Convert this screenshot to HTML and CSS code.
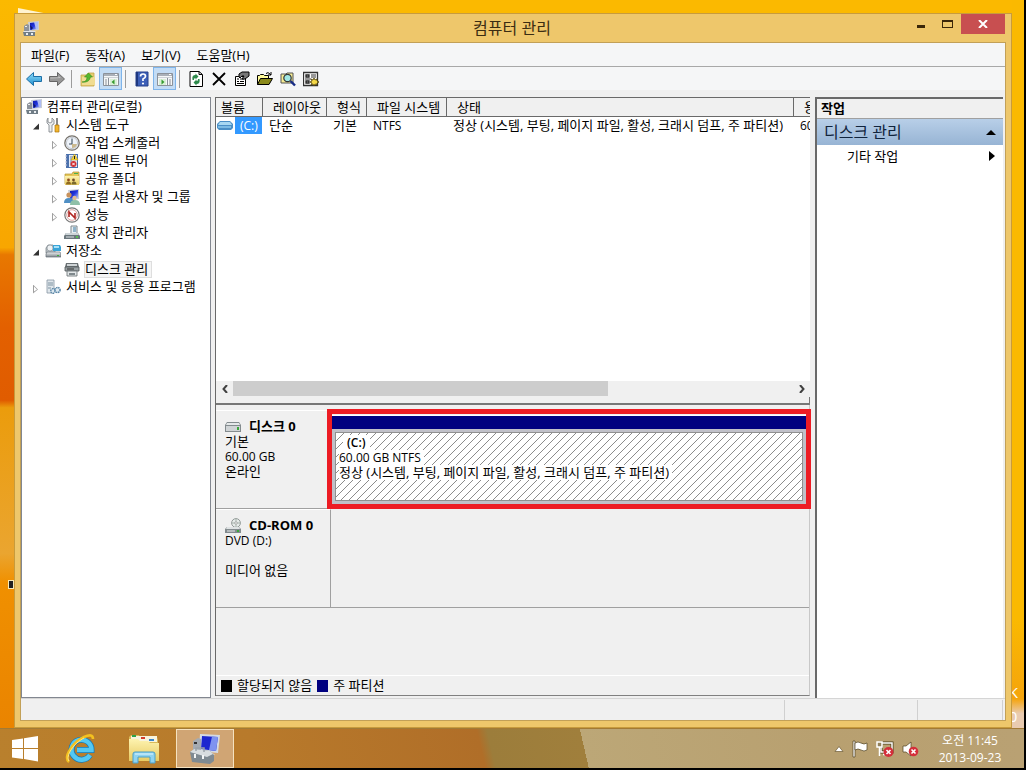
FILE: index.html
```html
<!DOCTYPE html>
<html lang="ko">
<head>
<meta charset="utf-8">
<title>컴퓨터 관리</title>
<link rel="stylesheet" href="styles.css">
</head>
<body>
<svg class="defs" aria-hidden="true">
  <defs>
    <linearGradient id="scr" x1="0" y1="0" x2="1" y2="1"><stop offset="0" stop-color="#0a14a8"/><stop offset=".5" stop-color="#2438e0"/><stop offset="1" stop-color="#c4d4ff"/></linearGradient>
    <linearGradient id="gry" x1="0" y1="0" x2="0" y2="1"><stop offset="0" stop-color="#f0f2f4"/><stop offset="1" stop-color="#7d868c"/></linearGradient>
    <linearGradient id="yel" x1="0" y1="0" x2="0" y2="1"><stop offset="0" stop-color="#fdf3b0"/><stop offset="1" stop-color="#e8cb62"/></linearGradient>
    <linearGradient id="arr" x1="0" y1="0" x2="0" y2="1"><stop offset="0" stop-color="#8fdcf8"/><stop offset="1" stop-color="#1f8fd0"/></linearGradient>
    <symbol id="i-comp" viewBox="0 0 16 16"><path d="M5 1 16 0v9l-10 1z" fill="#c9cdd6"/><path d="m7 2 8-1v7l-8 1z" fill="url(#scr)"/><path d="m11 1 4 0v7l-2 .3z" fill="#aebcf3"/><path d="M1 5l3-2 2 1v7H1z" fill="#8d939b"/><path d="M2 5h2v1H2z" fill="#eee"/><path d="M0 11h12v4H1z" fill="#707d86"/><path d="M1 10h11l1 1H0z" fill="#e3e6e8"/><path d="M3 12h2v2H3zM8 12h2v2H8z" fill="#e9edf0"/><path d="m7 4 3 3-2 2z" fill="#111a66"/></symbol>
    <symbol id="i-tools" viewBox="0 0 16 16"><path d="M3 1v4l2 1 2-1V1l2 2v4L7 8v7H4V8L2 6V3z" fill="#eceef0" stroke="#7a7f84" stroke-width=".8"/><path d="M11 1h2v7h-2z" fill="#888"/><path d="M10 8h4v7h-4z" fill="#f3b62c" stroke="#a9740e" stroke-width=".7"/></symbol>
    <symbol id="i-clock" viewBox="0 0 16 16"><circle cx="8" cy="8" r="7.2" fill="#eef3fa" stroke="#77736c" stroke-width="1.3"/><circle cx="8" cy="8" r="5.6" fill="none" stroke="#c5cad0"/><path d="M8 3.5V9H5" fill="none" stroke="#40505e" stroke-width="1.1"/><path d="M8 9h5a5 5 0 0 1-5 4z" fill="#cbb98e"/></symbol>
    <symbol id="i-event" viewBox="0 0 16 16"><path d="M2 1h12v14H2z" fill="#4b71ad"/><path d="M5 2h8v12H5z" fill="#e4ebf7"/><path d="M6 4h3M6 6h2M6 8h2M6 10h2M6 12h2" stroke="#6682ae"/><path d="m10.500 1 3.500 6H7z" fill="#f5d63d" stroke="#b99112" stroke-width=".5"/><path d="M10 3h1v3h-1z" fill="#222"/><circle cx="9.500" cy="11" r="3" fill="#d22e32"/><path d="m8.300 9.800 2.400 2.400m0-2.400-2.400 2.400" stroke="#fff"/><path d="M1 3h2M1 6h2M1 9h2M1 12h2" stroke="#ccd"/></symbol>
    <symbol id="i-share" viewBox="0 0 16 16"><path d="M1 3h7l1-2h6v12H1z" fill="#e6c85a" stroke="#b39332" stroke-width=".7"/><path d="M1 5h14v9H1z" fill="url(#yel)"/><path d="M10 2h4v1h-4z" fill="#47b04f"/><circle cx="4.500" cy="9" r="1.400" fill="#8d4a1e"/><path d="M2 13.500q0-3 2.500-3t2.500 3z" fill="#8f6a20"/><circle cx="9.500" cy="9" r="1.400" fill="#6f4d29"/><path d="M7.500 13.500q0-3 2.500-3t2.500 3z" fill="#7b6a2d"/></symbol>
    <symbol id="i-users" viewBox="0 0 16 16"><path d="M4 1 15 0v10L6 11z" fill="#c9cdd6"/><path d="m6 2 8-1v8l-8 1z" fill="url(#scr)"/><circle cx="5" cy="6" r="2.600" fill="#c9925c"/><path d="M0 14q0-5 5-5t5 5z" fill="#4f8fc4"/><circle cx="10.500" cy="9" r="2.200" fill="#e1bd93"/><path d="M6 16q0-5 5-5t5 5z" fill="#8fc0a8"/></symbol>
    <symbol id="i-perf" viewBox="0 0 16 16"><circle cx="8" cy="8" r="7.200" fill="#fff" stroke="#767676" stroke-width="1.200"/><circle cx="8" cy="8" r="5.300" fill="#fff" stroke="#d9a5a2" stroke-width="1"/><path d="M5 10V5l6 6V6" fill="none" stroke="#b02622" stroke-width="1.600"/></symbol>
    <symbol id="i-device" viewBox="0 0 16 16"><path d="M7 1h6v9H7z" fill="#e9eef1" stroke="#7d868c"/><path d="M9 2h3v5H9z" fill="#8fb3c9"/><path d="M2 8h12l2 3v3H0v-3z" fill="#6b777d"/><path d="M2 8h12l1 2H1z" fill="#cdd4d8"/><path d="M2 12h8" stroke="#dde2e5"/><path d="M12 11h2v2h-2z" fill="#56c04f"/></symbol>
    <symbol id="i-store" viewBox="0 0 16 16"><path d="M1 5 3 2h5l2 3v5H1z" fill="#bcc3c8" stroke="#717a80" stroke-width=".7"/><circle cx="5" cy="5" r="3" fill="#eef1f3" stroke="#8d959b" stroke-width=".7"/><path d="M8 2h7l1 2v4H8z" fill="#39a4d8"/><path d="M9 3h5v2H9z" fill="#a9e1f8"/><path d="M2 9h13l1 2v3H1v-3z" fill="url(#gry)" stroke="#666f75" stroke-width=".7"/><path d="M12 12h2v1h-2z" fill="#41b03b"/></symbol>
    <symbol id="i-disk" viewBox="0 0 16 16"><path d="M2 2h12l1 4H1z" fill="#6a7073"/><path d="M3 3h10v2H3z" fill="#cfd4d6"/><path d="M1 6h14v4H1z" fill="#9aa1a4" stroke="#4f5659" stroke-width=".8"/><path d="M3 8h7" stroke="#333"/><path d="M3 10h10v5H3z" fill="#e2e6e8" stroke="#62696c" stroke-width=".8"/><path d="M5 12h6v2H5z" fill="#7f888c"/></symbol>
    <symbol id="i-serv" viewBox="0 0 16 16"><path d="M2 1h7v13H2z" fill="#dfe6eb" stroke="#8696a2" stroke-width=".8"/><path d="M3 4h5M3 6h5M3 9h3" stroke="#7f93a1"/><circle cx="8" cy="12" r="2.300" fill="#dce8f0" stroke="#5a87a8" stroke-dasharray="1.500 .7" stroke-width="1.400"/><circle cx="12.500" cy="11" r="2.600" fill="#dce8f0" stroke="#5a87a8" stroke-dasharray="1.500 .6" stroke-width="1.500"/></symbol>
    <symbol id="i-drive" viewBox="0 0 16 10"><path d="M2 0h12l2 3v7H0V3z" fill="#838b8e"/><path d="M2 1h12l1 2H1z" fill="#e5e8e9"/><path d="M1 4h14v5H1z" fill="#d0d4d6"/><path d="M12 5h2v3h-2z" fill="#3aa63b"/></symbol>
    <symbol id="i-cd" viewBox="0 0 16 16"><circle cx="11" cy="5" r="4.400" fill="#e6ebe9" stroke="#8a9290" stroke-width=".9"/><path d="M11 1v8M7 5h8" stroke="#a6b3ac"/><circle cx="11" cy="5" r="1.200" fill="#fff" stroke="#888" stroke-width=".6"/><path d="M2 9h12l2 2v4H0v-4z" fill="#838b8e"/><path d="M2 9h12l1 2H1z" fill="#dfe3e4"/><path d="M2 13h8" stroke="#e9ecee"/><path d="M12 12h2v2h-2z" fill="#3aa63b"/></symbol>
    <pattern id="hatch" width="8" height="8" patternUnits="userSpaceOnUse"><path d="M-1 9 9-1M-1 1 1-1M7 9l2-2" stroke="#8c8c8c" stroke-width="1" fill="none"/></pattern>
  </defs>
</svg>

<main class="desktop">
  <span class="icon-corner"></span><span class="icon-edge"></span>
  <div class="watermark"><span>K</span><span>0</span></div>
  <section class="window">
    <header class="titlebar">
      <svg class="ico" viewBox="0 0 16 16"><use href="#i-comp"/></svg>
      <h1>컴퓨터 관리</h1>
      <div class="caption">
        <button type="button" class="min" aria-label="최소화"><i></i></button>
        <button type="button" class="max" aria-label="최대화"><i></i></button>
        <button type="button" class="close" aria-label="닫기"><svg width="10" height="8" viewBox="0 0 10 8"><path d="m1 0 8 8M9 0 1 8" stroke="#fff" stroke-width="2"/></svg></button>
      </div>
    </header>
    <div class="client">
      <nav class="menubar">
        <button type="button">파일(F)</button><button type="button">동작(A)</button><button type="button">보기(V)</button><button type="button">도움말(H)</button>
      </nav>
      <div class="toolbar">
        <button type="button" aria-label="뒤로"><svg viewBox="0 0 16 16"><path d="M.5 8 7.500 1.500v4h8v5h-8v4z" fill="url(#arr)" stroke="#1c6ea6"/></svg></button>
        <button type="button" aria-label="앞으로"><svg viewBox="0 0 16 16"><path d="M15.500 8 8.500 1.500v4h-8v5h8v4z" fill="#979797" stroke="#666"/><path d="M12 7 9.500 5v1.500h-8v1z" fill="#c4c4c4"/></svg></button>
        <span class="sep"></span>
        <button type="button" aria-label="위로"><svg viewBox="0 0 16 16"><path d="M1 4h6l1-2h6v13H1z" fill="#e7cd72" stroke="#c4a548" stroke-width=".8"/><path d="M2 6h13v8H2z" fill="#f0dc92"/><path d="M2 11q5 0 5-5H4.500l4-4 4 4h-2q-1 6-8.500 5z" fill="#55b82f" stroke="#348c1c" stroke-width=".6"/></svg></button>
        <button type="button" class="on" aria-label="콘솔 트리"><svg viewBox="0 0 16 16"><path d="M.5 2.500h15v12H.5z" fill="#f6f7f8" stroke="#8b9199"/><path d="M1 3h14v2H1z" fill="#aab0b8"/><path d="M1 6h14v1H1z" fill="#cdd2d6"/><path d="M5.500 7v8M2 9h2M2 11h2M2 13h2" stroke="#8b9199"/><path d="M7 8h7v6H7z" fill="#d9efd6"/><path d="M11.500 8.500v5l-3-2.500z" fill="#349b2f"/><path d="M12 3h2v1h-2z" fill="#fff"/></svg></button>
        <span class="sep"></span>
        <button type="button" aria-label="도움말"><svg viewBox="0 0 16 16"><path d="M2 1h12v14H2z" fill="#3c5fb8" stroke="#26408a"/><path d="M2 1h2v14H2z" fill="#1e3880"/><path d="M6.500 5.500Q6.500 3 9 3t2.500 2.300Q11.500 7 9 8v2" fill="none" stroke="#fff" stroke-width="1.700"/><circle cx="9" cy="12.500" r="1.100" fill="#fff"/></svg></button>
        <button type="button" class="on" aria-label="작업 창"><svg viewBox="0 0 16 16"><path d="M.5 2.500h15v12H.5z" fill="#f6f7f8" stroke="#8b9199"/><path d="M1 3h14v2H1z" fill="#aab0b8"/><path d="M1 6h14v1H1z" fill="#cdd2d6"/><path d="M10.500 7v8M12 9h2M12 11h2M12 13h2" stroke="#8b9199"/><path d="M2 8h7v6H2z" fill="#d9efd6"/><path d="M4.500 8.500v5l3-2.500z" fill="#349b2f"/><path d="M12 3h2v1h-2z" fill="#fff"/></svg></button>
        <span class="sep"></span>
        <button type="button" aria-label="새로 고침"><svg viewBox="0 0 16 16"><path d="M2 .5h9L14.500 3.500v12H2z" fill="#fff" stroke="#000"/><path d="M11 .5v3h3" fill="none" stroke="#000"/><path d="M4.500 9q-1-5 3-5V2.500l3 3-3 3V7q-2 0-1.500 2z" fill="#2e8a4c"/><path d="M11.500 8q1 5-3 5v1.500l-3-3 3-3V10q2 0 1.500-2z" fill="#2e8a4c"/></svg></button>
        <button type="button" aria-label="삭제"><svg viewBox="0 0 16 16"><path d="m2 2 12 12M14 2 2 14" stroke="#000" stroke-width="1.800"/></svg></button>
        <button type="button" aria-label="속성"><svg viewBox="0 0 16 16"><path d="M1.500 5.500h10v9h-10z" fill="#fff" stroke="#000"/><path d="M3 8h2M6 8h4M3 10.500h2M6 10.500h4M3 12.500h7" stroke="#000"/><path d="M5 6V3l3-2h7v4l-4 3H8l2-3H8L6 7z" fill="#777" stroke="#000"/></svg></button>
        <button type="button" aria-label="열기"><svg viewBox="0 0 16 16"><path d="M.5 13.500v-9h2l1-1h3l1 1h4v3" fill="#fffb9a" stroke="#000"/><path d="m.5 13.500 3-6h12l-3.500 6z" fill="#8a8a1c" stroke="#000"/><path d="M9 2.500q2-2 4 .5l1 1m0-3v3h-3" fill="none" stroke="#000"/></svg></button>
        <button type="button" aria-label="찾기"><svg viewBox="0 0 16 16"><path d="M1 3h5l1-1h6v10H1z" fill="#f5ec93" stroke="#555"/><circle cx="7.500" cy="7" r="3.700" fill="#9fe7e4" stroke="#333" stroke-width="1.200"/><path d="m10.500 10 4.500 4.500" stroke="#182d87" stroke-width="2.400"/></svg></button>
        <button type="button" aria-label="설정"><svg viewBox="0 0 16 16"><path d="M.5 1.500h14v13H.5z" fill="#fff" stroke="#333" stroke-width="1.300"/><path d="M3 4h3v2H3zM3 10h3v2H3z" fill="none" stroke="#222" stroke-width="1.300"/><path d="M8 4h5M8 6h5M2 8h6" stroke="#333"/><path d="m11 7 1 2 2-1v2l2 1-2 1v2l-2-1-1 2-1-2-2 1 1-2-2-1 2-1-1-2 2 1z" fill="#f4d848" stroke="#4b3c00" stroke-width=".8"/></svg></button>
      </div>
      <div class="panes">
        <aside class="tree">
          <ul>
            <li><div class="row root"><svg class="ico"><use href="#i-comp"/></svg><span>컴퓨터 관리(로컬)</span></div>
              <ul class="lvl1">
                <li><div class="row"><i class="exp open"></i><svg class="ico"><use href="#i-tools"/></svg><span>시스템 도구</span></div>
                  <ul class="lvl2">
                    <li class="row"><i class="exp"></i><svg class="ico"><use href="#i-clock"/></svg><span>작업 스케줄러</span></li>
                    <li class="row"><i class="exp"></i><svg class="ico"><use href="#i-event"/></svg><span>이벤트 뷰어</span></li>
                    <li class="row"><i class="exp"></i><svg class="ico"><use href="#i-share"/></svg><span>공유 폴더</span></li>
                    <li class="row"><i class="exp"></i><svg class="ico"><use href="#i-users"/></svg><span>로컬 사용자 및 그룹</span></li>
                    <li class="row"><i class="exp"></i><svg class="ico"><use href="#i-perf"/></svg><span>성능</span></li>
                    <li class="row"><i class="exp none"></i><svg class="ico"><use href="#i-device"/></svg><span>장치 관리자</span></li>
                  </ul></li>
                <li><div class="row"><i class="exp open"></i><svg class="ico"><use href="#i-store"/></svg><span>저장소</span></div>
                  <ul class="lvl2"><li class="row"><i class="exp none"></i><svg class="ico"><use href="#i-disk"/></svg><span class="sel">디스크 관리</span></li></ul></li>
                <li class="row"><i class="exp"></i><svg class="ico"><use href="#i-serv"/></svg><span>서비스 및 응용 프로그램</span></li>
              </ul></li>
          </ul>
        </aside>

        <section class="center">
          <div class="volumes">
            <div class="list">
              <table>
                <colgroup><col class="c1"><col class="c2"><col class="c3"><col class="c4"><col class="c5"><col class="c6"></colgroup>
                <thead><tr><th>볼륨</th><th>레이아웃</th><th>형식</th><th>파일 시스템</th><th>상태</th><th>용량</th></tr></thead>
                <tbody><tr><td class="vol"><div><svg width="18" height="10" viewBox="0 0 18 10"><path d="M4 0h10l3 3v4l-2 2H3L1 7V3z" fill="#4b8fc6"/><path d="M4 1h10l2 3H2z" fill="#a8d8f2"/><path d="M2 5h13v2H2z" fill="#7cbbe4"/></svg><span class="en">(C:)</span></div></td><td>단순</td><td>기본</td><td class="en">NTFS</td><td>정상 (시스템, 부팅, 페이지 파일, 활성, 크래시 덤프, 주 파티션)</td><td class="en">60.00 GB</td></tr></tbody>
              </table>
            </div>
            <div class="scroll"><button type="button" aria-label="왼쪽"><svg width="6" height="8" viewBox="0 0 6 8"><path d="M5 0 1.500 4 5 8" fill="none" stroke="#404040" stroke-width="2"/></svg></button><div class="track"><div class="thumb"></div></div><button type="button" aria-label="오른쪽"><svg width="6" height="8" viewBox="0 0 6 8"><path d="m1 0 3.500 4L1 8" fill="none" stroke="#404040" stroke-width="2"/></svg></button></div>
            <div class="splitter"></div>
          </div>
          <div class="graph">
            <div class="diskrow">
              <div class="label"><h2><svg class="drv" viewBox="0 0 16 10"><use href="#i-drive"/></svg>디스크 0</h2><p>기본</p><p class="en">60.00 GB</p><p>온라인</p></div>
              <div class="parts"><div class="part"><div class="bar"></div><div class="vbody"><div class="hatched"><svg class="fill" width="100%" height="100%"><rect width="100%" height="100%" fill="url(#hatch)"/></svg><p class="en name"><span>(C:)</span></p><p class="en"><span>60.00 GB NTFS</span></p><p><span>정상 (시스템, 부팅, 페이지 파일, 활성, 크래시 덤프, 주 파티션)</span></p></div></div></div><div class="mark"></div></div>
            </div>
            <div class="diskrow cd">
              <div class="label"><h2><svg class="ico" viewBox="0 0 16 16"><use href="#i-cd"/></svg>CD-ROM 0</h2><p class="en">DVD (D:)</p><p>&nbsp;</p><p>미디어 없음</p></div>
              <div class="parts"></div>
            </div>
            <div class="legend"><i class="k"></i><span>할당되지 않음</span><i class="n"></i><span>주 파티션</span></div>
          </div>
        </section>

        <aside class="actions">
          <h2>작업</h2>
          <button type="button" class="group">디스크 관리<svg width="10" height="5" viewBox="0 0 10 5"><path d="M5 0 10 5H0z"/></svg></button>
          <button type="button" class="more">기타 작업<svg width="6" height="10" viewBox="0 0 6 10"><path d="M0 0 6 5 0 10z"/></svg></button>
        </aside>
      </div>
      <footer class="status"><span></span><span></span><span></span></footer>
    </div>
  </section>
</main>

<footer class="taskbar">
  <button type="button" class="start" aria-label="시작"><svg width="28" height="26" viewBox="0 0 28 26"><path d="M1 4 12 2.500V12H1zM13 2.300 27 0v12H13zM1 13h11v10L1 21.500zM13 13h14v12.500L13 23z" fill="#fff"/></svg></button>
  <button type="button" class="ie" aria-label="Internet Explorer"><svg width="32" height="32" viewBox="0 0 32 32"><path d="M25 22A10 10 0 1 1 26.500 17H12" fill="none" stroke="#1679b5" stroke-width="6"/><path d="M25 22A10 10 0 1 1 26.500 17H12" fill="none" stroke="#54c8f2" stroke-width="4.500"/><path d="M4 29C-2 24 8 9 19 4q9-4 9 2" fill="none" stroke="#f4c11f" stroke-width="2.600"/><path d="M4 28C0 23 9 10 19 5" fill="none" stroke="#ffe98a" stroke-width="1"/></svg></button>
  <button type="button" class="files" aria-label="파일 탐색기"><svg width="32" height="30" viewBox="0 0 32 30"><path d="M1 3 3 1h8l1 2h17l1 3v20H1z" fill="#d9bb59"/><path d="M3 2h26v6H3z" fill="#f8f4dd"/><path d="M4 1h4v2H4z" fill="#2ca34a"/><path d="M13 3h4v2h-4z" fill="#d33c2d"/><path d="M21 5h5v2h-5z" fill="#3b87c9"/><path d="M1 5h9l2 2h8l2 2h9v18H1z" fill="url(#yel)"/><path d="M5 29v-9q0-2 2-2h18q2 0 2 2v9h-5v-6H10v6z" fill="#8fd3f0" stroke="#4a9fc8"/><path d="M7 20h18" stroke="#dff5ff"/></svg></button>
  <button type="button" class="active" aria-label="컴퓨터 관리"><svg width="32" height="32" viewBox="0 0 32 32"><path d="M11 1 31 2l-2 18-19-2z" fill="#d5dae3"/><path d="m13 3 16 1-2 14-15-2z" fill="#1c26cf"/><path d="m23 3.600 6 .4-2 14-7-1z" fill="#7f93f0"/><path d="M4 8l5-3 3 1v14H4z" fill="#a5abb2"/><path d="M5 9h3v2H5z" fill="#333"/><path d="m14 18 8 1 4 3-8 1z" fill="#e5e8ed"/><path d="m1 19 4-3 16 2 4 4v6l-4 3-18-2z" fill="#7f8a92"/><path d="m1 19 4-3 16 2 3 3-6 3z" fill="#d8dde0"/><path d="M7 18v-3h8v4" fill="none" stroke="#9aa3a9" stroke-width="1.500"/><path d="M5 21h2v4H5zM13 22h2v4h-2z" fill="#f4f6f7"/></svg></button>
  <div class="tray">
    <svg width="10" height="6" viewBox="0 0 10 6"><path d="m5 .5 4 5H1z" fill="#fff" stroke="#6b5a35" stroke-width=".7"/></svg>
    <svg width="18" height="18" viewBox="0 0 18 18"><path d="M2 1h2v16H2z" fill="#fff" stroke="#4d401f" stroke-width=".7"/><path d="M4 3q3-2 6 0t6 0v7q-3 2-6 0t-6 0z" fill="#fff" stroke="#4d401f" stroke-width=".7"/></svg>
    <svg width="18" height="18" viewBox="0 0 18 18"><path d="M5 3h11v9H5z" fill="none" stroke="#4d401f" stroke-width="3"/><path d="M5 3h11v9H5zM7 14.500h7" fill="none" stroke="#fff" stroke-width="1.500"/><path d="M1 2h5v5H1zM3.500 7v9" fill="#93815a" stroke="#fff" stroke-width="1.500"/><circle cx="12.500" cy="12" r="5" fill="#d42e3a"/><path d="m10.500 10 4 4m0-4-4 4" stroke="#fff" stroke-width="1.600"/></svg>
    <svg width="18" height="18" viewBox="0 0 18 18"><path d="M2 6h3l5-4v14l-5-4H2z" fill="#fff" stroke="#4d401f" stroke-width=".7"/><circle cx="12.500" cy="11.500" r="4.800" fill="#d42e3a"/><path d="m10.500 9.500 4 4m0-4-4 4" stroke="#fff" stroke-width="1.600"/></svg>
    <div class="clock"><span>오전 11:45</span><span>2013-09-23</span></div>
  </div>
</footer>
</body>
</html>
```
FILE: styles.css
```css
* { box-sizing: border-box; }
body {
  margin: 0;
  height: 100vh;
  display: flex;
  flex-direction: column;
  padding: 0 2px 2px 0;
  background: #000;
  color: #000;
  font: 13px/18px "Open Sans", "Noto Sans CJK KR", sans-serif;
  overflow: hidden;
}
h1, h2, p, ul { margin: 0; padding: 0; font-size: inherit; }
ul { list-style: none; }
button { border: 0; padding: 0; background: none; font: inherit; color: inherit; }
svg { display: block; flex: none; }
.defs { position: absolute; width: 0; height: 0; }
.ico { width: 16px; height: 16px; flex: none; }
.en { font-size: 12px; }

.desktop {
  position: relative;
  flex: 1;
  min-height: 0;
  display: flex;
  padding: 13px 12px 0 14px;
  background:
    linear-gradient(#fab900 0, #fab900 85%, #f5a40c 96%, #e9cbb0 98%) right / 12px 100% no-repeat,
    linear-gradient(#fbb900 0, #f8a600 34%, #e87800 35%, #e36000 45%, #e05c00 55%, #eb9c0c 56%, #eaa530 76%, #f09000 80%, #ea8400 100%) left / 14px 100% no-repeat,
    #fbb900;
}
.icon-corner { position: absolute; left: 18px; top: 8px; width: 28px; height: 8px; background: #fff3cf; clip-path: polygon(0 0, 100% 70%, 100% 100%, 0 100%); }
.icon-edge { position: absolute; left: 8px; top: 580px; width: 6px; height: 9px; background: #222; border: 1px solid #f7e9b5; }
.watermark { position: absolute; right: 6px; bottom: 0; display: flex; flex-direction: column; color: #fff; font-size: 15px; line-height: 24px; }

.window {
  position: relative;
  flex: 1;
  min-width: 0;
  display: flex;
  flex-direction: column;
  padding: 0 6px 7px;
  background: #eec76b;
  border: 1px solid #c79b3d;
}
.titlebar { position: relative; display: flex; align-items: center; height: 29px; padding-left: 2px; }
.titlebar h1 { flex: 1; text-align: center; font-size: 16px; line-height: 22px; font-weight: 400; color: #3b2d12; padding: 0 20px 2px 0; }
.caption { position: absolute; top: 0; right: 0; display: flex; height: 20px; }
.caption button { width: 27px; display: grid; place-items: center; }
.caption .close { width: 44px; background: #c84f50; }
.min i { width: 8px; height: 3px; background: #3b2708; margin-top: 5px; }
.max i { width: 11px; height: 8px; border: 1px solid #3b2708; border-top-width: 2px; }

.client { flex: 1; min-height: 0; display: flex; flex-direction: column; background: #f0f0f0; outline: 1px solid #c2a057; }
.menubar { display: flex; height: 24px; padding-left: 2px; background: #f5f6f7; border-bottom: 1px solid #a8a8a8; }
.menubar button { padding: 0 8px; line-height: 20px; }
.toolbar { display: flex; height: 23px; padding-left: 1px; background: #f5f6f7; }
.toolbar button { width: 23px; height: 23px; display: grid; place-items: center; }
.toolbar button svg { width: 16px; height: 16px; }
.toolbar .on { background: #c3dcf5; border: 1px solid #7eb4ea; }
.sep { width: 1px; height: 18px; margin: 3px 4px 0 3px; background: #9c9c9c; }

.panes { flex: 1; min-height: 0; display: flex; padding: 7px 2px 0 0; background: #f0f0f0; }
.tree { width: 190px; margin-right: 4px; background: #fff; border: 1px solid #828790; white-space: nowrap; }
.row { display: flex; align-items: center; height: 18px; gap: 5px; }
.row span { line-height: 16px; padding-bottom: 2px; }
.root { padding-left: 4px; }
.lvl1 { padding-left: 9px; }
.lvl2 { padding-left: 19px; }
.exp { width: 9px; height: 9px; flex: none; background: #a0a0a0; clip-path: polygon(2px 0, 7px 5px, 2px 9px, 2px 0, 3px 2px, 3px 7px, 6px 5px, 3px 2px); margin-top: 4px; }
.exp.open { background: #333; clip-path: polygon(8px 1px, 8px 7px, 2px 7px); }
.exp.none { visibility: hidden; }
.row .sel { background: #f5f5f5; outline: 1px solid #dedede; padding-right: 3px; padding-bottom: 0; line-height: 15px; }

.center { flex: 1; min-width: 0; display: flex; flex-direction: column; margin-bottom: 2px; border-left: 1px solid #696969; border-top: 1px solid #696969; }
.volumes { flex: 1 1 307px; min-height: 0; display: flex; flex-direction: column; background: #fff; }
.list { flex: 1; min-height: 0; overflow: hidden; }
table { width: 700px; table-layout: fixed; border-collapse: separate; border-spacing: 0; }
.c1 { width: 47px; } .c2 { width: 64px; } .c3 { width: 40px; } .c4 { width: 80px; } .c5 { width: 347px; }
th { height: 19px; padding: 0 0 0 10px; text-align: left; font-weight: 400; line-height: 16px; background: #f0f0f0; border-right: 1px solid #696969; border-bottom: 1px solid #696969; white-space: nowrap; overflow: hidden; }
th:first-child { padding-left: 5px; }
td { padding: 0 0 0 6px; height: 17px; line-height: 17px; white-space: nowrap; }
.vol { padding: 0; }
.vol div { display: flex; align-items: center; gap: 1px; }
.vol span { flex: 1; margin-right: 1px; padding-left: 5px; background: #3399ff; color: #fff; }
.scroll { display: flex; height: 16px; background: #f0f0f0; }
.scroll button { width: 17px; display: grid; place-items: center; }
.track { flex: 1; display: flex; }
.thumb { width: 67%; background: #cdcdcd; height: 15px; }
.splitter { height: 8px; background: #f0f0f0; border-bottom: 2px solid #777; border-right: 1px solid #777; }

.graph { flex: 1 1 291px; min-height: 0; display: flex; flex-direction: column; padding-top: 5px; background: #f0f0f0; border-bottom: 1px solid #808080; border-right: 1px solid #c8c8c8; line-height: 15px; }
.diskrow { display: flex; min-height: 99px; border-bottom: 1px solid #a0a0a0; }
.label { width: 112px; flex: none; padding: 8px 0 0 9px; border-top: 1px solid #fff; }
.label h2 { display: flex; align-items: center; gap: 8px; height: 15px; font-weight: 700; }
.drv { width: 16px; height: 10px; }
.parts { position: relative; flex: 1; min-width: 0; display: flex; }
.part { flex: 1; display: flex; flex-direction: column; margin: 5px 3px 4px 4px; border-top: 1px solid #fff; }
.bar { height: 13px; background: #000080; }
.vbody { flex: 1; display: flex; padding: 3px; background: #c0c0c8; }
.hatched { position: relative; flex: 1; padding-left: 3px; background: #fff; border: 1px solid #909090; }
.fill { position: absolute; inset: 0; }
.hatched p { position: relative; white-space: nowrap; height: 15px; }
.hatched p span { display: inline-block; background: #fff; padding-right: 3px; }
.hatched .name { font-weight: 600; margin-top: 2px; padding-left: 4px; }
.hatched .name span { padding: 0 4px; }
.mark { position: absolute; inset: -1px -2px -1px -1px; border: 5px solid #ed1c24; }
.cd .label { border-right: 1px solid #a0a0a0; width: 115px; }
.legend { display: flex; align-items: center; gap: 5px; height: 20px; margin-top: auto; padding-left: 5px; border-top: 1px solid #fff; }
.legend i { width: 11px; height: 12px; }
.legend .k { background: #000; }
.legend .n { background: #000080; }

.actions { width: 188px; margin-left: 5px; background: #fff; border-left: 2px solid #696969; border-top: 2px solid #696969; }
.actions h2 { height: 20px; padding-left: 4px; line-height: 18px; font-weight: 700; background: #f0f0f0; border-bottom: 1px solid #a0a0a0; }
.actions button { display: flex; width: 100%; align-items: center; justify-content: space-between; }
.group { height: 26px; padding: 0 7px; font-size: 16px; background: linear-gradient(#b8cfe8, #97b4d4); color: #10243c; }
.more { height: 22px; padding: 0 8px 0 30px; }

.status { display: flex; height: 22px; border-top: 1px solid #d5d5d5; }
.status span { width: 133px; border-right: 1px solid #d0d0d0; margin-top: 1px; }
.status span:first-child { flex: 1; }
.status span:last-child { width: 85px; margin-right: 2px; }

.taskbar {
  display: flex;
  align-items: center;
  height: 40px;
  border-top: 1px solid #a27a35;
  background: linear-gradient(77deg, #b9802d 0, #b87a2b 25%, #b06e28 47%, #9c7d3b 48%, #a07f3c 57%, #bca777 57%, #b8a070 80%, #b9a173 100%);
}
.taskbar button { display: grid; place-items: center; height: 39px; }
.start { width: 50px; }
.ie { width: 62px; }
.files { width: 64px; }
.active { width: 58px; background: #d0a574; border: 1px solid #f5e2c0; }
.tray { margin-left: auto; display: flex; align-items: center; gap: 7px; padding-right: 20px; color: #fff; }
.clock { display: flex; flex-direction: column; align-items: center; line-height: 17px; width: 68px; margin-left: 10px; white-space: nowrap; font-size: 12px; }
```
